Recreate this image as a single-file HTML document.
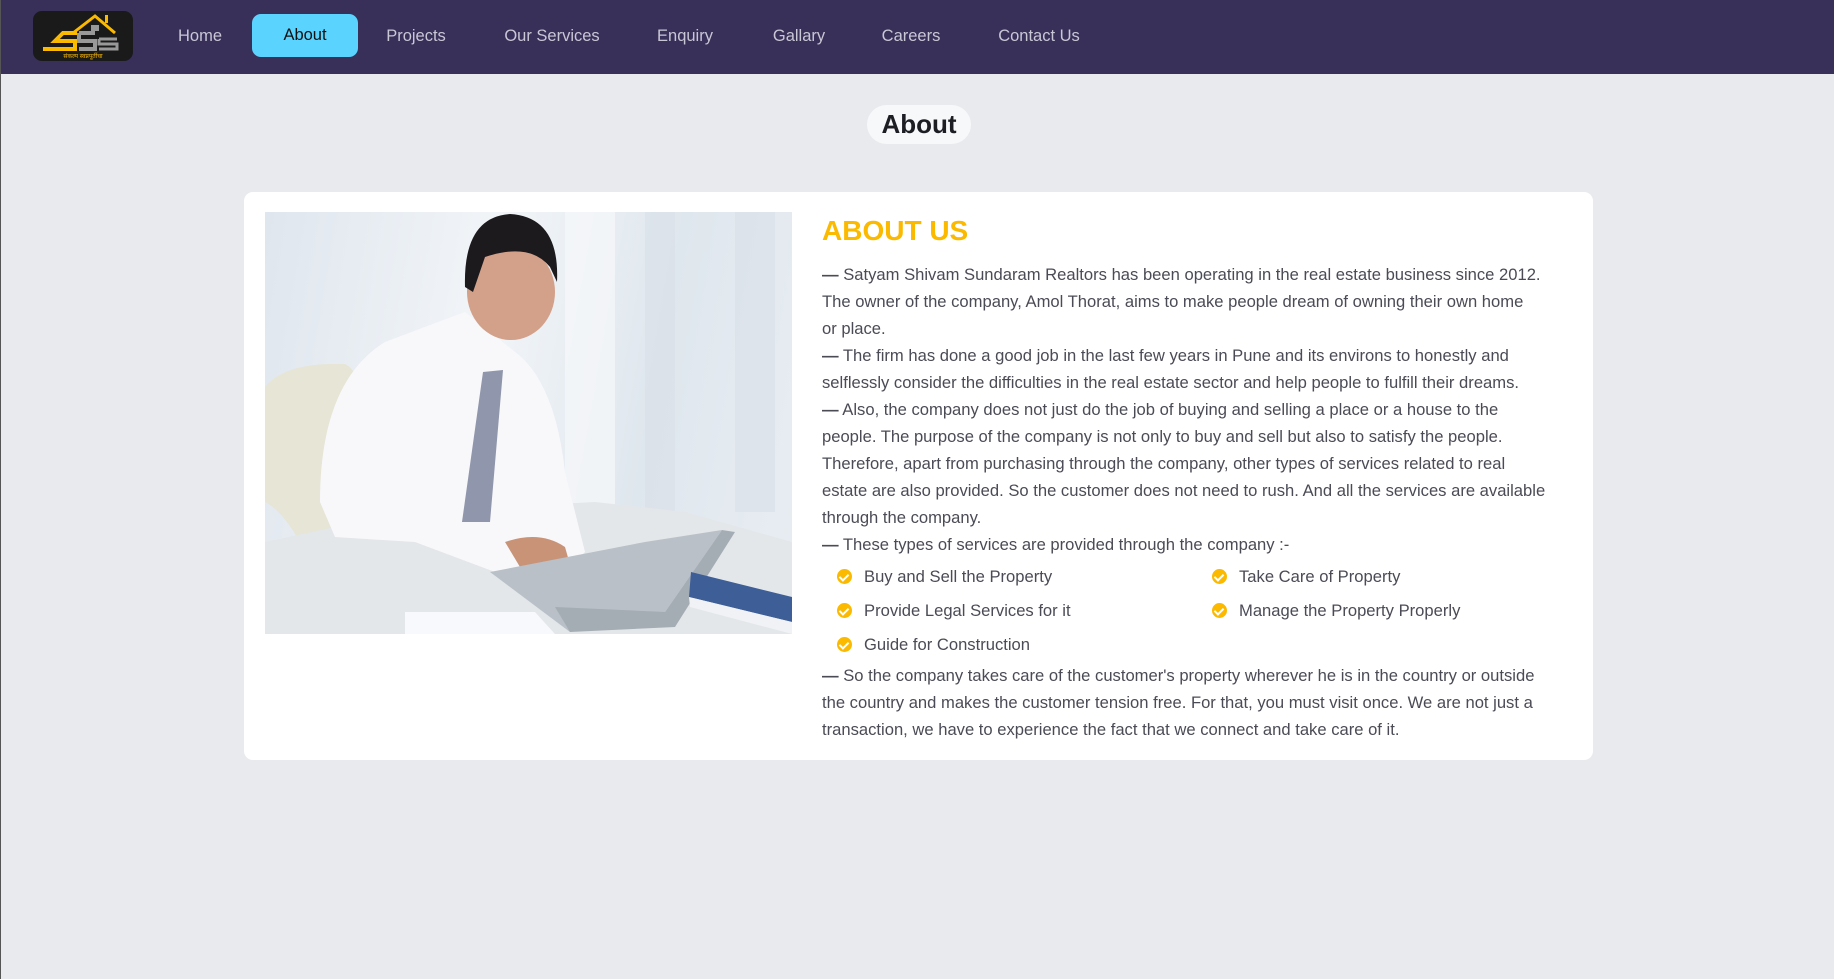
<!DOCTYPE html>
<html><head><meta charset="utf-8">
<style>
*{margin:0;padding:0;box-sizing:border-box}
body{width:1834px;height:979px;background:#e9eaee;font-family:"Liberation Sans",sans-serif;position:relative;overflow:hidden;border-left:1px solid #555}
.nav{position:absolute;left:0;top:0;width:1834px;height:74px;background:#383058}
.logo{position:absolute;left:32px;top:11px;width:100px;height:50px;background:#1a1a1a;border-radius:9px;overflow:hidden}
.nav a{position:absolute;top:15px;height:43px;line-height:43px;font-size:16.5px;color:#c9c6d6;text-decoration:none;transform:translateX(-50%)}
.nav a.act{top:14px;background:#5ad4ff;color:#111;border-radius:9px;width:106px;text-align:center}
.title{position:absolute;left:866px;top:105px;width:104px;height:39px;background:#f7f8fa;border-radius:20px;text-align:center;line-height:39px;font-weight:bold;font-size:26px;color:#1d1d24}
.card{position:absolute;left:243px;top:192px;width:1349px;height:568px;background:#fff;border-radius:9px}
.img{position:absolute;left:264px;top:212px;width:527px;height:422px;overflow:hidden;background:linear-gradient(100deg,#dfe6ee 0%,#f2f5f8 40%,#dfe7ee 70%,#e8edf2 100%)}
h2{position:absolute;left:821px;top:215px;font-size:28px;color:#fbb900;font-weight:bold}
.txt{position:absolute;left:821px;top:261px;width:780px;font-size:16.6px;line-height:27px;color:#4b4b56;white-space:nowrap}
.list{position:relative;height:102px;margin:2px 0 0 0}
.list div{position:absolute;height:34px;line-height:34px}
.chk{display:inline-block;width:15px;height:15px;border-radius:50%;background:#fbb900;vertical-align:-2px;margin-right:12px;position:relative}
.chk:after{content:"";position:absolute;left:4px;top:3px;width:4px;height:7px;border:solid #fff;border-width:0 2px 2px 0;transform:rotate(45deg)}
</style></head><body>
<div class="nav">
 <div class="logo">
  <svg width="100" height="50" viewBox="0 0 100 50">
   <polyline points="40,22 62,5 82,22" fill="none" stroke="#fbb900" stroke-width="3"/>
   <rect x="72" y="4" width="3" height="8" fill="#fbb900"/>
   <rect x="58" y="14" width="8" height="6" fill="#999"/>
   <path d="M10 38 L42 38 L42 30 L22 30 L30 22 L44 22" fill="none" stroke="#fbb900" stroke-width="4"/>
   <path d="M46 22 L62 22 M46 22 L46 30 L62 30 L62 38 L46 38" fill="none" stroke="#999" stroke-width="4"/>
   <path d="M66 28 L84 28 M66 28 L66 33 L84 33 L84 38 L66 38" fill="none" stroke="#999" stroke-width="3"/>
   <text x="50" y="47" font-size="6" fill="#fbb900" text-anchor="middle" font-family="Liberation Sans">संकल्प स्वप्नपूर्तीचा</text>
  </svg>
 </div>
 <a style="left:199px">Home</a>
 <a class="act" style="left:304px">About</a>
 <a style="left:415px">Projects</a>
 <a style="left:551px">Our Services</a>
 <a style="left:684px">Enquiry</a>
 <a style="left:798px">Gallary</a>
 <a style="left:910px">Careers</a>
 <a style="left:1038px">Contact Us</a>
</div>
<div class="title">About</div>
<div class="card"></div>
<div class="img">
 <svg width="527" height="422" viewBox="0 0 527 422">
  <rect x="300" y="0" width="50" height="300" fill="#f6f8fa" opacity=".7"/>
  <rect x="380" y="0" width="30" height="300" fill="#d9e0e8" opacity=".6"/>
  <rect x="470" y="0" width="40" height="300" fill="#d9e0e8" opacity=".6"/>
  <path d="M0 175 Q20 150 80 152 Q97 160 96 200 L90 300 L55 336 L40 340 Q20 300 0 290Z" fill="#e6e5d6"/>
  <path d="M0 330 L140 300 L330 290 L420 300 L527 330 L527 422 L0 422Z" fill="#e3e7ea"/>
  <path d="M55 290 Q55 170 120 130 L200 100 L250 140 Q290 170 300 260 L320 340 L300 360 L230 360 L150 330 L70 325 Z" fill="#f8f8fb"/>
  <path d="M218 160 L238 158 L225 310 L197 310 Z" fill="#9096ab"/>
  <ellipse cx="246" cy="80" rx="44" ry="48" fill="#d3a08a"/>
  <path d="M200 75 Q198 5 245 2 Q295 5 292 70 L285 55 Q265 30 220 45 L208 80 Z" fill="#1c1a1c"/>
  <path d="M240 330 Q275 318 300 335 L310 370 L270 380 Z" fill="#c99378"/>
  <path d="M225 360 L380 330 L457 318 L400 400 L305 420 Z" fill="#b9c0c7"/>
  <path d="M290 395 L400 400 L457 318 L470 320 L410 415 L305 420 Z" fill="#a5adb4"/>
  <path d="M426 360 L527 385 L527 410 L424 385 Z" fill="#3e5e98"/>
  <path d="M424 385 L527 410 L527 422 L425 395 Z" fill="#f0f2f5"/>
  <path d="M140 400 L270 400 L290 422 L140 422 Z" fill="#f7f9fc"/>
 </svg>
</div>
<h2>ABOUT US</h2>
<div class="txt">
 <p><b>—</b> Satyam Shivam Sundaram Realtors has been operating in the real estate business since 2012.<br>The owner of the company, Amol Thorat, aims to make people dream of owning their own home<br>or place.</p>
 <p><b>—</b> The firm has done a good job in the last few years in Pune and its environs to honestly and<br>selflessly consider the difficulties in the real estate sector and help people to fulfill their dreams.</p>
 <p><b>—</b> Also, the company does not just do the job of buying and selling a place or a house to the<br>people. The purpose of the company is not only to buy and sell but also to satisfy the people.<br>Therefore, apart from purchasing through the company, other types of services related to real<br>estate are also provided. So the customer does not need to rush. And all the services are available<br>through the company.</p>
 <p><b>—</b> These types of services are provided through the company :-</p>
 <div class="list">
  <div style="left:15px;top:0"><span class="chk"></span>Buy and Sell the Property</div>
  <div style="left:390px;top:0"><span class="chk"></span>Take Care of Property</div>
  <div style="left:15px;top:34px"><span class="chk"></span>Provide Legal Services for it</div>
  <div style="left:390px;top:34px"><span class="chk"></span>Manage the Property Properly</div>
  <div style="left:15px;top:68px"><span class="chk"></span>Guide for Construction</div>
 </div>
 <p><b>—</b> So the company takes care of the customer's property wherever he is in the country or outside<br>the country and makes the customer tension free. For that, you must visit once. We are not just a<br>transaction, we have to experience the fact that we connect and take care of it.</p>
</div>
</body></html>
